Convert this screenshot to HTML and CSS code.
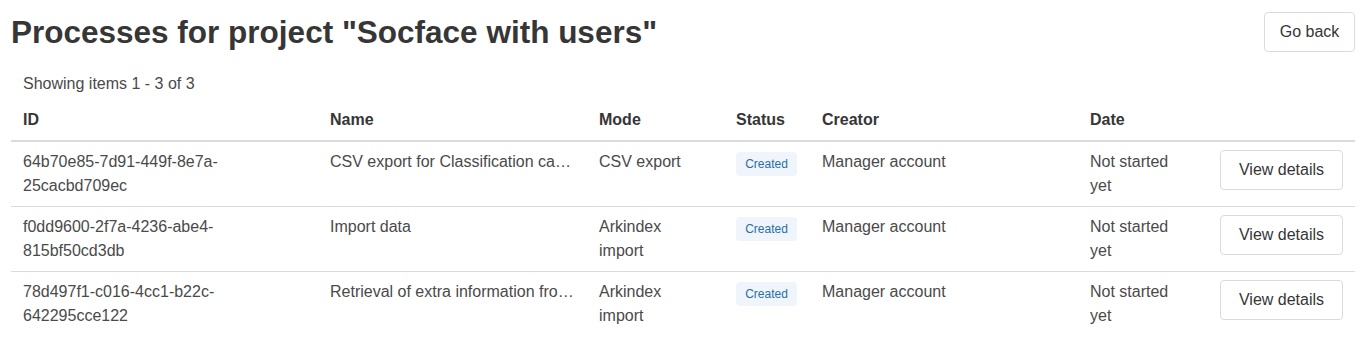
FILE: index.html
```html
<!DOCTYPE html>
<html lang="en">
<head>
  <meta charset="UTF-8">
  <title>Processes</title>
  <link rel="stylesheet" href="styles.css">
</head>
<body>
  <div class="page">
    <div class="page-head">
      <h1 class="title">Processes for project "Socface with users"</h1>
      <button class="button">Go back</button>
    </div>
    <p class="counter">Showing items 1 - 3 of 3</p>
    <table class="table">
      <thead>
        <tr>
          <th class="col-id">ID</th>
          <th class="col-name">Name</th>
          <th class="col-mode">Mode</th>
          <th class="col-status">Status</th>
          <th class="col-creator">Creator</th>
          <th class="col-date">Date</th>
          <th class="col-actions"></th>
        </tr>
      </thead>
      <tbody>
        <tr>
          <td>64b70e85-7d91-449f-8e7a-25cacbd709ec</td>
          <td><div class="ellipsis">CSV export for Classification campaign</div></td>
          <td><div class="narrow">CSV export</div></td>
          <td><span class="tag">Created</span></td>
          <td>Manager account</td>
          <td><div class="narrow">Not started yet</div></td>
          <td class="actions"><button class="button">View details</button></td>
        </tr>
        <tr>
          <td>f0dd9600-2f7a-4236-abe4-815bf50cd3db</td>
          <td><div class="ellipsis">Import data</div></td>
          <td><div class="narrow">Arkindex import</div></td>
          <td><span class="tag">Created</span></td>
          <td>Manager account</td>
          <td><div class="narrow">Not started yet</div></td>
          <td class="actions"><button class="button">View details</button></td>
        </tr>
        <tr>
          <td>78d497f1-c016-4cc1-b22c-642295cce122</td>
          <td><div class="ellipsis">Retrieval of extra information from the census</div></td>
          <td><div class="narrow">Arkindex import</div></td>
          <td><span class="tag">Created</span></td>
          <td>Manager account</td>
          <td><div class="narrow">Not started yet</div></td>
          <td class="actions"><button class="button">View details</button></td>
        </tr>
      </tbody>
    </table>
  </div>
</body>
</html>
```

FILE: styles.css
```css
body {
  margin: 0;
  font-family: 'Liberation Sans', Arial, sans-serif;
  font-size: 16px;
  line-height: 24px;
  color: #4a4a4a;
  background: #fff;
}
.page {
  padding: 12px 16px 0 11px;
}
.page-head {
  display: flex;
  align-items: center;
  justify-content: space-between;
}
.title {
  margin: 0;
  font-size: 31.5px;
  line-height: 40px;
  font-weight: 700;
  color: #363636;
}
.button {
  font-family: inherit;
  font-size: 16px;
  color: #363636;
  background: #fff;
  border: 1px solid #dbdbdb;
  border-radius: 4px;
  height: 40px;
  padding: 0 14px;
  white-space: nowrap;
  cursor: pointer;
}
.page-head .button {
  width: 91px;
  margin-top: -1px;
}
.counter {
  margin: 20px 0 4px 0;
  padding-left: 12px;
}
.table {
  width: 100%;
  border-collapse: collapse;
  table-layout: fixed;
}
.table th,
.table td {
  box-sizing: border-box;
  padding: 8px 12px;
  text-align: left;
  vertical-align: top;
  border-bottom: 1px solid #dbdbdb;
}
.table th {
  color: #363636;
  font-weight: 700;
  border-bottom-width: 2px;
}
.table tbody tr:last-child td {
  border-bottom: none;
}
.col-id { width: 307px; }
.col-name { width: 269px; }
.col-mode { width: 137px; }
.col-status { width: 86px; }
.col-creator { width: 268px; }
.col-date { width: 130px; }
.col-actions { width: 147px; }
.ellipsis {
  white-space: nowrap;
  overflow: hidden;
  text-overflow: ellipsis;
}
.narrow {
  max-width: 96px;
}
.tag {
  display: inline-flex;
  align-items: center;
  justify-content: center;
  height: 24px;
  width: 61px;
  margin-top: 2px;
  border-radius: 4px;
  background: #eff5fb;
  color: #296fa8;
  font-size: 12px;
  vertical-align: top;
}
.table td.actions {
  text-align: right;
}
.actions .button {
  width: 123px;
}
```
